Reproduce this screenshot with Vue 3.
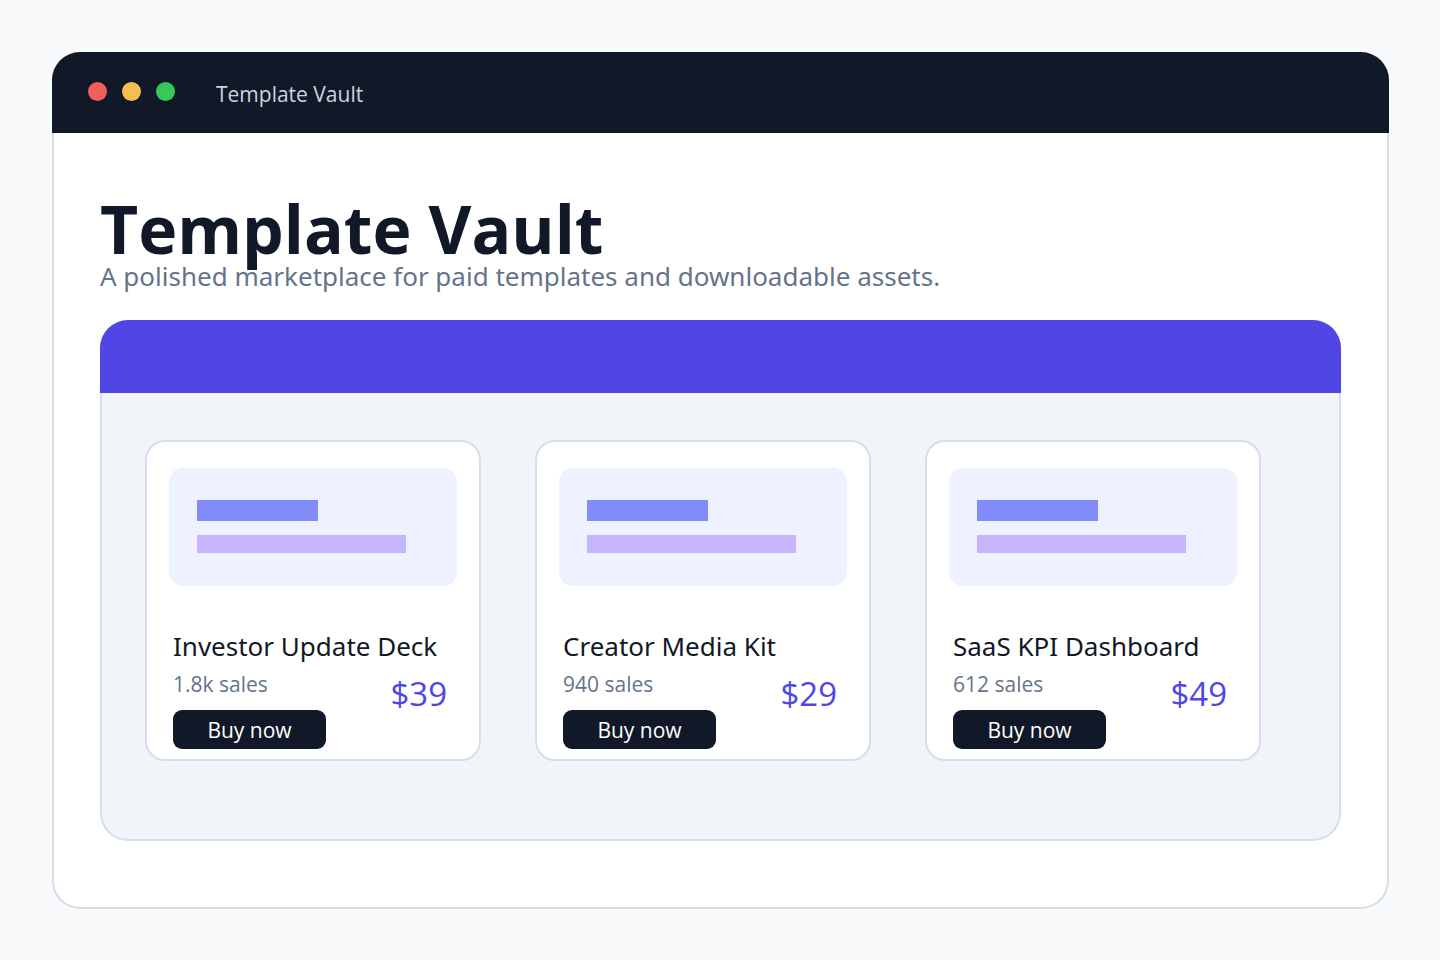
<script setup>
const products = [
  { name: 'Investor Update Deck', sales: '1.8k sales', price: '$39' },
  { name: 'Creator Media Kit', sales: '940 sales', price: '$29' },
  { name: 'SaaS KPI Dashboard', sales: '612 sales', price: '$49' },
]
</script>

<template>
  <main class="page">
    <div class="window">
      <header class="titlebar">
        <div class="dots" aria-hidden="true">
          <i class="dot red"></i>
          <i class="dot yellow"></i>
          <i class="dot green"></i>
        </div>
        <span class="window-title">Template Vault</span>
      </header>
      <div class="content">
        <h1>Template Vault</h1>
        <p class="subtitle">A polished marketplace for paid templates and downloadable assets.</p>
        <section class="panel" aria-label="Templates">
          <div class="banner"></div>
          <div class="grid">
            <article v-for="product in products" :key="product.name" class="card">
              <div class="preview" aria-hidden="true">
                <div class="bar primary"></div>
                <div class="bar secondary"></div>
              </div>
              <h2>{{ product.name }}</h2>
              <div class="details">
                <div class="purchase">
                  <p class="sales">{{ product.sales }}</p>
                  <button type="button">Buy now</button>
                </div>
                <span class="price">{{ product.price }}</span>
              </div>
            </article>
          </div>
        </section>
      </div>
    </div>
  </main>
</template>

<style>
body {
  background: #f8fafc;
}
</style>

<style scoped>
* {
  box-sizing: border-box;
}

.page {
  display: flex;
  min-height: 100vh;
  padding: 52px 51px 51px 52px;
  font-family: "Segoe UI", "Open Sans", "Noto Sans", sans-serif;
  color: #111827;
}

.window {
  display: flex;
  flex-direction: column;
  flex: 1;
  min-width: 0;
}

.titlebar {
  display: flex;
  align-items: center;
  gap: 41px;
  padding: 26px 36px 23px;
  border-radius: 28px 28px 0 0;
  background: #111827;
}

.dots {
  display: flex;
  gap: 15px;
  padding-bottom: 5px;
}

.dot {
  width: 19px;
  height: 19px;
  border-radius: 50%;
}

.red {
  background: #f25f5a;
}

.yellow {
  background: #f6bd50;
}

.green {
  background: #37c85a;
}

.window-title {
  font-size: 21px;
  line-height: 32px;
  color: #cbd5e1;
}

.content {
  flex: 1;
  padding: 61px 46px 66px;
  border: 2px solid #d6deea;
  border-top: 0;
  border-radius: 0 0 28px 28px;
  background: #fff;
}

h1 {
  margin: 0;
  font-size: 66px;
  font-weight: 700;
  line-height: 68px;
}

.subtitle {
  margin: 0;
  font-family: "Segoe UI", "Noto Sans", "Open Sans", sans-serif;
  font-size: 26px;
  line-height: 28px;
  color: #64748b;
}

.panel {
  margin-top: 30px;
}

.banner {
  height: 73px;
  border-radius: 28px 28px 0 0;
  background: #4f46e5;
}

.grid {
  display: grid;
  grid-template-columns: repeat(3, 1fr);
  gap: 54px;
  padding: 47px 78px 78px 43px;
  border: 2px solid #d6deea;
  border-top: 0;
  border-radius: 0 0 28px 28px;
  background: #f1f5f9;
}

.card {
  padding: 26px 22px 10px;
  border: 2px solid #d6deea;
  border-radius: 20px;
  background: #fff;
}

.preview {
  height: 118px;
  padding: 32px 28px;
  border-radius: 14px;
  background: #eef2ff;
}

.primary {
  width: 52%;
  height: 21px;
  background: #818cf8;
}

.secondary {
  width: 90%;
  height: 18px;
  margin-top: 14px;
  background: #c4b5fd;
}

h2 {
  margin: 42px 4px 0;
  font-family: "Segoe UI", "Noto Sans", "Open Sans", sans-serif;
  font-size: 26px;
  font-weight: 400;
  line-height: 36px;
  white-space: nowrap;
}

.details {
  display: flex;
  justify-content: space-between;
  margin: 6px 10px 0 4px;
}

.sales {
  margin: 0;
  font-size: 21px;
  line-height: 28px;
  color: #64748b;
}

button {
  width: 153px;
  height: 39px;
  margin-top: 12px;
  padding: 2px 0 0;
  border: 0;
  border-radius: 9px;
  background: #111827;
  color: #fff;
  font-family: inherit;
  font-size: 21px;
  line-height: 37px;
}

.price {
  font-size: 33px;
  line-height: 48px;
  color: #4f46e5;
}
</style>
